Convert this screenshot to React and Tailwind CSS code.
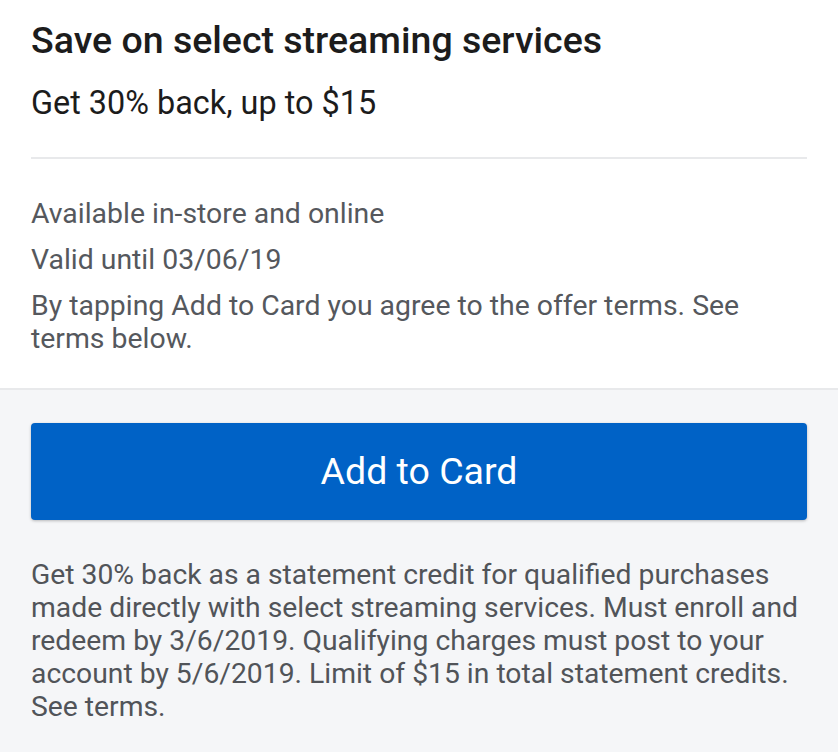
export default function App() {
  return (
    <div className="w-[838px] h-[752px] overflow-hidden bg-[#f5f6f8] font-['Roboto',sans-serif]">
      <div className="bg-white px-[31px] pt-[16px] pb-[33px]">
        <h1 className="text-[37.5px] leading-[48px] font-medium text-[#1c1c1c]">Save on select streaming services</h1>
        <p className="mt-[17px] text-[32.4px] leading-[44px] text-[#1c1c1c]">Get 30% back, up to $15</p>
        <div className="mt-[32px] h-[2px] bg-[#e8e9eb]" />
        <div className="mt-[38px] flex flex-col gap-[13px] text-[28.4px] leading-[33px] text-[#55585d]">
          <p>Available in-store and online</p>
          <p>Valid until 03/06/19</p>
          <p>By tapping Add to Card you agree to the offer terms. See terms below.</p>
        </div>
      </div>
      <div className="border-t-2 border-[#e8e9eb] px-[31px] pt-[33px]">
        <button className="w-full h-[97px] rounded-[4px] bg-[#0062c6] text-white text-[37.5px] shadow-[0_1px_3px_rgba(0,0,0,0.25)]">
          Add to Card
        </button>
        <p className="mt-[38px] text-[28.3px] leading-[33px] text-[#515459]">
          Get 30% back as a statement credit for qualified purchases made directly with select streaming services. Must enroll and redeem by 3/6/2019. Qualifying charges must post to your account by 5/6/2019. Limit of $15 in total statement credits. See terms.
        </p>
      </div>
    </div>
  );
}
